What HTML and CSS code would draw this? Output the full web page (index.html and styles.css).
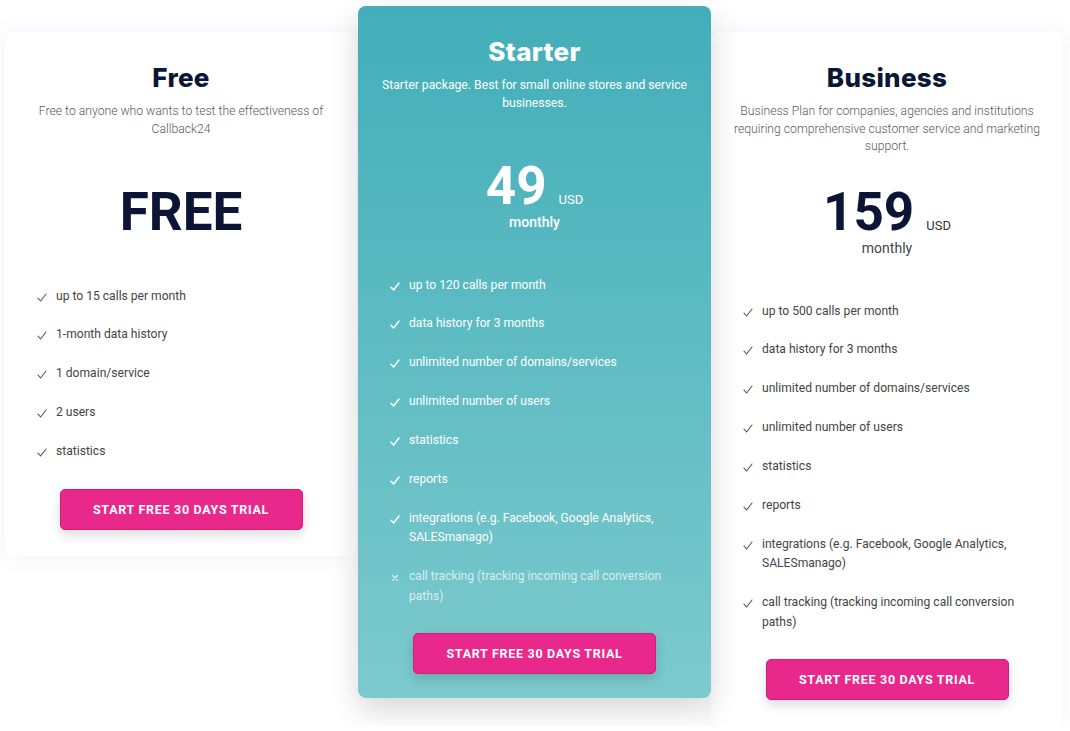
FILE: index.html
```html
<!DOCTYPE html>
<html lang="en">
<head>
<meta charset="utf-8">
<title>Pricing</title>
<link rel="stylesheet" href="styles.css">
</head>
<body>
<div class="pricing">
  <section class="card">
    <h2 class="title">Free</h2>
    <p class="desc">Free to anyone who wants to test the effectiveness of Callback24</p>
    <div class="price price-solo"><span class="amount">FREE</span></div>
    <ul class="features">
      <li><svg class="ico" viewBox="0 0 10 9"><path d="M1 5.2 L3.6 8 L9 1"/></svg><span>up to 15 calls per month</span></li>
      <li><svg class="ico" viewBox="0 0 10 9"><path d="M1 5.2 L3.6 8 L9 1"/></svg><span>1-month data history</span></li>
      <li><svg class="ico" viewBox="0 0 10 9"><path d="M1 5.2 L3.6 8 L9 1"/></svg><span>1 domain/service</span></li>
      <li><svg class="ico" viewBox="0 0 10 9"><path d="M1 5.2 L3.6 8 L9 1"/></svg><span>2 users</span></li>
      <li><svg class="ico" viewBox="0 0 10 9"><path d="M1 5.2 L3.6 8 L9 1"/></svg><span>statistics</span></li>
    </ul>
    <button class="cta">START FREE 30 DAYS TRIAL</button>
  </section>

  <section class="card featured">
    <h2 class="title">Starter</h2>
    <p class="desc">Starter package. Best for small online stores and service businesses.</p>
    <div class="price"><span class="amount">49</span><span class="cur">USD</span></div>
    <div class="period">monthly</div>
    <ul class="features">
      <li><svg class="ico" viewBox="0 0 10 9"><path d="M1 5.2 L3.6 8 L9 1"/></svg><span>up to 120 calls per month</span></li>
      <li><svg class="ico" viewBox="0 0 10 9"><path d="M1 5.2 L3.6 8 L9 1"/></svg><span>data history for 3 months</span></li>
      <li><svg class="ico" viewBox="0 0 10 9"><path d="M1 5.2 L3.6 8 L9 1"/></svg><span>unlimited number of domains/services</span></li>
      <li><svg class="ico" viewBox="0 0 10 9"><path d="M1 5.2 L3.6 8 L9 1"/></svg><span>unlimited number of users</span></li>
      <li><svg class="ico" viewBox="0 0 10 9"><path d="M1 5.2 L3.6 8 L9 1"/></svg><span>statistics</span></li>
      <li><svg class="ico" viewBox="0 0 10 9"><path d="M1 5.2 L3.6 8 L9 1"/></svg><span>reports</span></li>
      <li><svg class="ico" viewBox="0 0 10 9"><path d="M1 5.2 L3.6 8 L9 1"/></svg><span>integrations (e.g. Facebook, Google Analytics, SALESmanago)</span></li>
      <li class="off"><svg class="ico" viewBox="0 0 10 9"><path d="M2.5 2.5 L7.5 7.5 M7.5 2.5 L2.5 7.5"/></svg><span>call tracking (tracking incoming call conversion paths)</span></li>
    </ul>
    <button class="cta">START FREE 30 DAYS TRIAL</button>
  </section>

  <section class="card">
    <h2 class="title">Business</h2>
    <p class="desc">Business Plan for companies, agencies and institutions requiring comprehensive customer service and marketing support.</p>
    <div class="price"><span class="amount">159</span><span class="cur">USD</span></div>
    <div class="period">monthly</div>
    <ul class="features">
      <li><svg class="ico" viewBox="0 0 10 9"><path d="M1 5.2 L3.6 8 L9 1"/></svg><span>up to 500 calls per month</span></li>
      <li><svg class="ico" viewBox="0 0 10 9"><path d="M1 5.2 L3.6 8 L9 1"/></svg><span>data history for 3 months</span></li>
      <li><svg class="ico" viewBox="0 0 10 9"><path d="M1 5.2 L3.6 8 L9 1"/></svg><span>unlimited number of domains/services</span></li>
      <li><svg class="ico" viewBox="0 0 10 9"><path d="M1 5.2 L3.6 8 L9 1"/></svg><span>unlimited number of users</span></li>
      <li><svg class="ico" viewBox="0 0 10 9"><path d="M1 5.2 L3.6 8 L9 1"/></svg><span>statistics</span></li>
      <li><svg class="ico" viewBox="0 0 10 9"><path d="M1 5.2 L3.6 8 L9 1"/></svg><span>reports</span></li>
      <li><svg class="ico" viewBox="0 0 10 9"><path d="M1 5.2 L3.6 8 L9 1"/></svg><span>integrations (e.g. Facebook, Google Analytics, SALESmanago)</span></li>
      <li><svg class="ico" viewBox="0 0 10 9"><path d="M1 5.2 L3.6 8 L9 1"/></svg><span>call tracking (tracking incoming call conversion paths)</span></li>
    </ul>
    <button class="cta">START FREE 30 DAYS TRIAL</button>
  </section>
</div>
</body>
</html>
```

FILE: styles.css
```css
html, body {
  margin: 0;
  padding: 0;
  background: #ffffff;
}

body {
  font-family: Roboto, "Liberation Sans", sans-serif;
  color: #444;
}

.pricing {
  display: flex;
  align-items: flex-start;
  padding: 6px 7px 0 5px;
}

.card {
  box-sizing: border-box;
  width: 352px;
  margin-top: 26px;
  padding: 0 18px 26px;
  background: #fff;
  border-radius: 8px;
  text-align: center;
  box-shadow: 0 0 22px rgba(150, 110, 230, 0.10);
}

.card.featured {
  width: 353px;
  margin-top: 0;
  margin-left: 1px;
  position: relative;
  z-index: 1;
  padding-bottom: 24px;
  background: linear-gradient(180deg, #42aeb9 0%, #7ccacd 100%);
  box-shadow: 0 12px 30px rgba(0, 0, 0, 0.16);
  color: #fff;
}

.title {
  margin: 30px 0 0;
  font-family: Inter, "Open Sans", sans-serif;
  font-weight: 800;
  font-size: 26px;
  line-height: 32px;
  color: #0b1536;
  letter-spacing: 0.3px;
}

.featured .title {
  color: #fff;
}

.desc {
  margin: 9px 0 0;
  min-height: 52.5px;
  font-size: 12.2px;
  line-height: 17.5px;
  font-weight: 300;
  color: #5a5a5a;
}

.featured .desc {
  color: #fff;
  font-weight: 400;
}

.price {
  margin-top: 34px;
  display: flex;
  justify-content: center;
  align-items: baseline;
}

.price-solo {
  padding-bottom: 8px;
}

.amount {
  font-family: Roboto, sans-serif;
  font-weight: 700;
  font-size: 53px;
  line-height: 44px;
  color: #0b1536;
}

.featured .amount {
  color: #fff;
}

.cur {
  margin-left: 12px;
  font-size: 13px;
  line-height: 16px;
  color: #333;
}

.featured .cur {
  color: #fff;
}

.period {
  margin-top: 5px;
  font-size: 14px;
  line-height: 18px;
  color: #444;
}

.featured .period {
  color: #fff;
  font-weight: 500;
}

.features {
  list-style: none;
  margin: 45px 0 0;
  padding: 0 14px;
  text-align: left;
}

.features li {
  display: flex;
  align-items: flex-start;
  font-size: 12.1px;
  line-height: 19.4px;
  color: #444;
  margin-top: 19.5px;
}

.features li:first-child {
  margin-top: 0;
}

.featured .features li {
  color: #fff;
  font-weight: 400;
}

.featured .features li.off {
  color: rgba(255, 255, 255, 0.72);
}

.ico {
  flex-shrink: 0;
  width: 10px;
  height: 9px;
  margin: 6px 9px 0 0;
  fill: none;
  stroke: #555;
  stroke-width: 1.1;
  stroke-linecap: round;
  stroke-linejoin: round;
}

.featured .ico {
  stroke: #fff;
  stroke-width: 1.5;
}

.featured .off .ico {
  stroke: rgba(255, 255, 255, 0.75);
  stroke-width: 1.1;
}

.cta {
  display: block;
  width: 243px;
  height: 41px;
  margin: 27px auto 0;
  background: #e9288b;
  border: 1px solid #d01c7a;
  border-radius: 5px;
  color: #fff;
  font-family: Roboto, sans-serif;
  font-weight: 700;
  font-size: 12.5px;
  letter-spacing: 0.7px;
  box-shadow: 0 5px 12px rgba(0, 0, 0, 0.14);
  cursor: pointer;
}
```
